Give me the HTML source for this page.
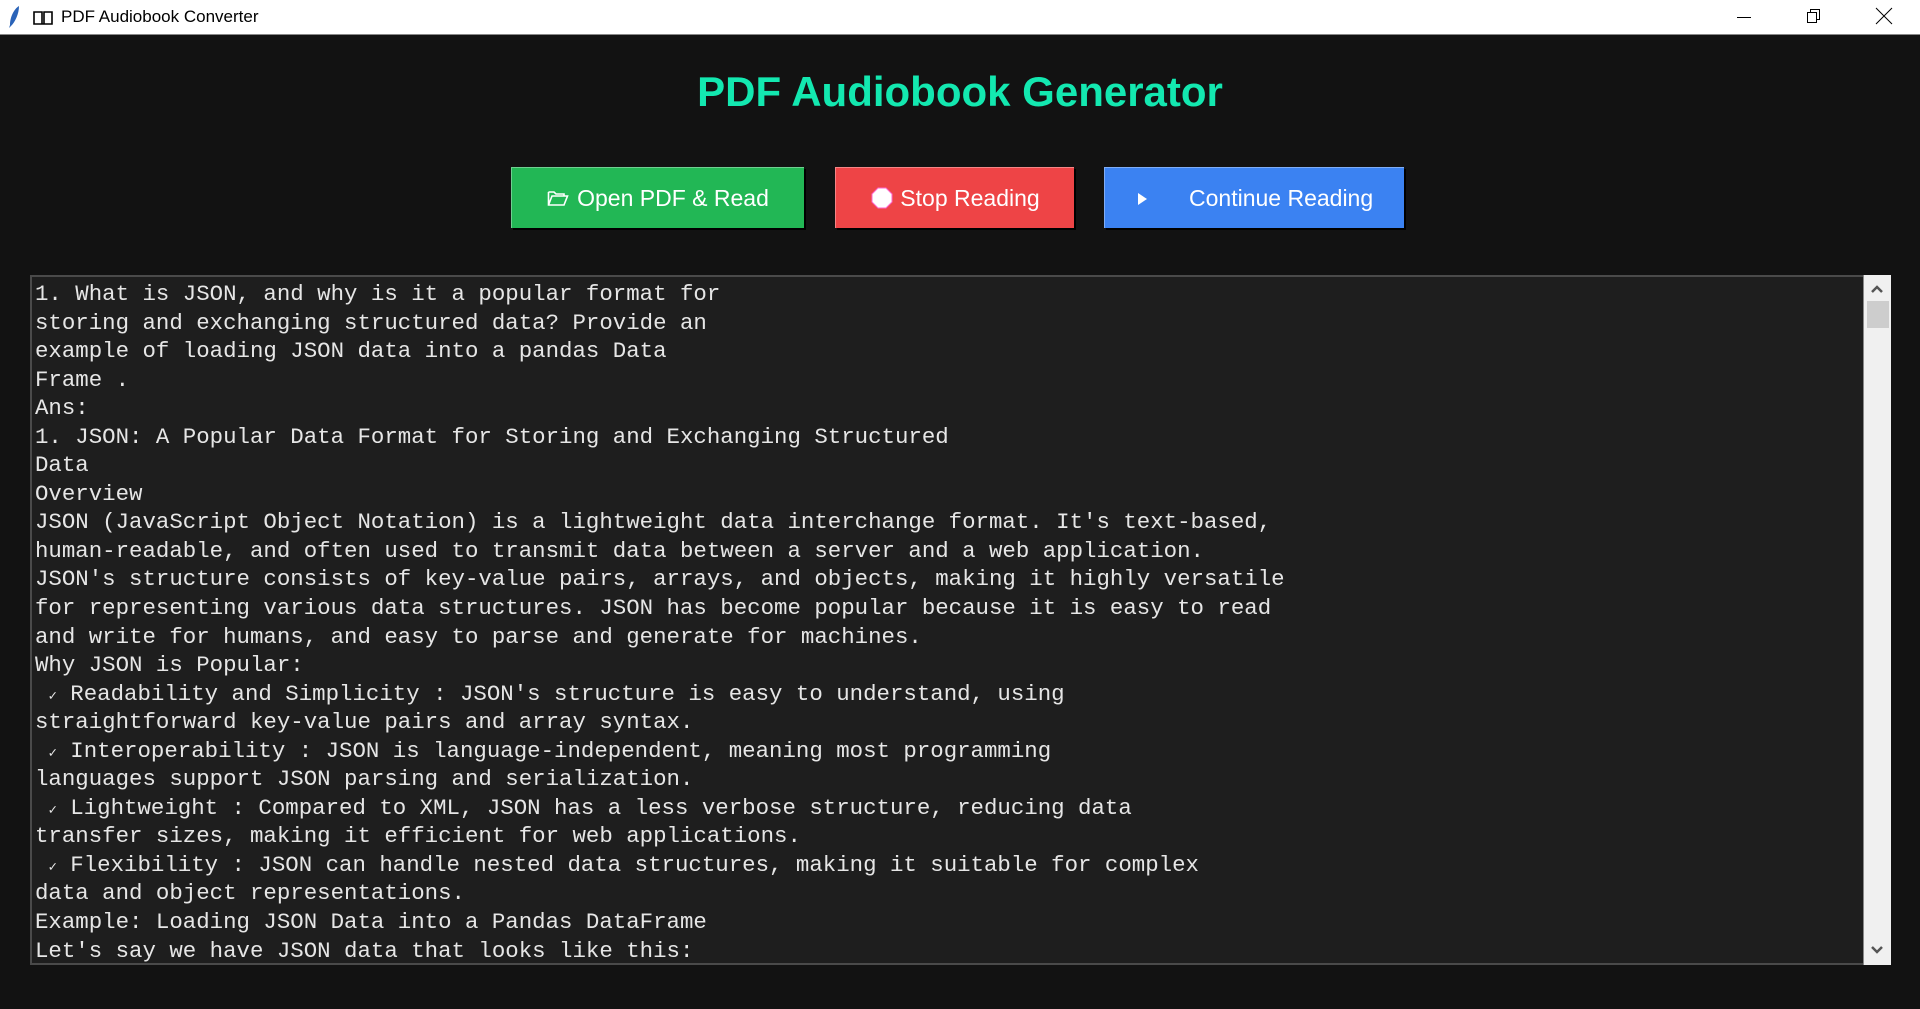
<!DOCTYPE html>
<html><head><meta charset="utf-8"><style>
*{margin:0;padding:0;box-sizing:border-box}
body{width:1920px;height:1009px;background:#121212;position:relative;overflow:hidden;font-family:"Liberation Sans",sans-serif}
.tb{position:absolute;left:0;top:0;width:1920px;height:35px;background:#fff;border-bottom:1px solid #888}
.tb .t{position:absolute;left:61px;top:7px;font-size:17px;color:#000}
h1{position:absolute;left:0;width:1920px;top:68px;text-align:center;font-size:42px;font-weight:bold;color:#13e8b0}
.btn{position:absolute;top:167px;height:61px;color:#fff;font-size:23px;display:flex;align-items:center;justify-content:center;box-shadow:2px 2px 0 #000;border-top:1px solid rgba(255,255,255,.35);border-left:1px solid rgba(255,255,255,.35)}
.ta{position:absolute;left:30px;top:275px;width:1861px;height:690px;background:#1e1e1e;border:2px solid #4a4a4a;border-right:none;overflow:hidden}
pre{position:absolute;left:3px;top:3px;font-family:"Liberation Mono",monospace;font-size:22.4px;line-height:28.55px;color:#e6e6e6}
pre span{font-size:14px;line-height:0}
.sb{position:absolute;left:1863px;top:275px;width:28px;height:690px;background:#f0f0f0;border-left:1px solid #888}
.th{position:absolute;left:3px;top:26px;width:22px;height:27px;background:#cdcdcd}
</style></head><body>
<div class="tb">
<svg style="position:absolute;left:6px;top:5px" width="16" height="24" viewBox="0 0 16 24"><path d="M13 1 C8 4 4 12 4 20 L3 23 L5 21 C9 17 13 9 13 1Z" fill="#2a63b8"/></svg>
<svg style="position:absolute;left:33px;top:10px" width="20" height="16" viewBox="0 0 20 16"><path d="M1 2 H9 V14 H1Z M11 2 H19 V14 H11Z M1 14 H19" fill="none" stroke="#000" stroke-width="1.6"/></svg>
<div class="t">PDF Audiobook Converter</div>
<svg style="position:absolute;left:1736px;top:10px" width="16" height="16"><path d="M1 7.5H15" stroke="#000"/></svg>
<svg style="position:absolute;left:1806px;top:8px" width="16" height="16"><path d="M1.5 4.5H10.5V14.5H1.5Z M4.5 4.5V1.5H13.5V11.5H10.5" fill="none" stroke="#000"/></svg>
<svg style="position:absolute;left:1875px;top:7px" width="18" height="18"><path d="M1 1L17 17M17 1L1 17" stroke="#000"/></svg>
</div>
<h1>PDF Audiobook Generator</h1>
<div class="btn" style="left:511px;width:293px;background:#22b755">
<svg width="22" height="18" viewBox="0 0 22 18" style="margin-right:8px"><path d="M1.5 3V16H17L20.5 7H5L1.5 16 M1.5 3H7L9 5H17V7" fill="none" stroke="#fff" stroke-width="1.6"/></svg>Open PDF &amp; Read</div>
<div class="btn" style="left:835px;width:239px;background:#ee4446">
<svg width="24" height="24" viewBox="0 0 24 24" style="margin-right:6px"><polygon points="8,2 16,2 22,8 22,16 16,22 8,22 2,16 2,8" fill="#fff" stroke="#f6c" stroke-width="1"/></svg>Stop Reading</div>
<div class="btn" style="left:1104px;width:300px;background:#3b82f2;justify-content:flex-start">
<svg width="10" height="12" style="position:absolute;left:33px;top:25px"><path d="M0 0L9 6L0 12Z" fill="#fff"/></svg>
<span style="position:absolute;left:84px">Continue Reading</span></div>
<div class="ta"><pre>1. What is JSON, and why is it a popular format for
storing and exchanging structured data? Provide an
example of loading JSON data into a pandas Data
Frame .
Ans:
1. JSON: A Popular Data Format for Storing and Exchanging Structured
Data
Overview
JSON (JavaScript Object Notation) is a lightweight data interchange format. It's text-based,
human-readable, and often used to transmit data between a server and a web application.
JSON's structure consists of key-value pairs, arrays, and objects, making it highly versatile
for representing various data structures. JSON has become popular because it is easy to read
and write for humans, and easy to parse and generate for machines.
Why JSON is Popular:
 <span>✓</span> Readability and Simplicity : JSON's structure is easy to understand, using
straightforward key-value pairs and array syntax.
 <span>✓</span> Interoperability : JSON is language-independent, meaning most programming
languages support JSON parsing and serialization.
 <span>✓</span> Lightweight : Compared to XML, JSON has a less verbose structure, reducing data
transfer sizes, making it efficient for web applications.
 <span>✓</span> Flexibility : JSON can handle nested data structures, making it suitable for complex
data and object representations.
Example: Loading JSON Data into a Pandas DataFrame
Let's say we have JSON data that looks like this:</pre></div>
<div class="sb">
<svg width="14" height="10" style="position:absolute;left:6px;top:9px"><path d="M2 8L7 3L12 8" fill="none" stroke="#555" stroke-width="2.5"/></svg>
<div class="th"></div>
<svg width="14" height="10" style="position:absolute;left:6px;top:670px"><path d="M2 2L7 7L12 2" fill="none" stroke="#555" stroke-width="2.5"/></svg>
</div>
</body></html>
